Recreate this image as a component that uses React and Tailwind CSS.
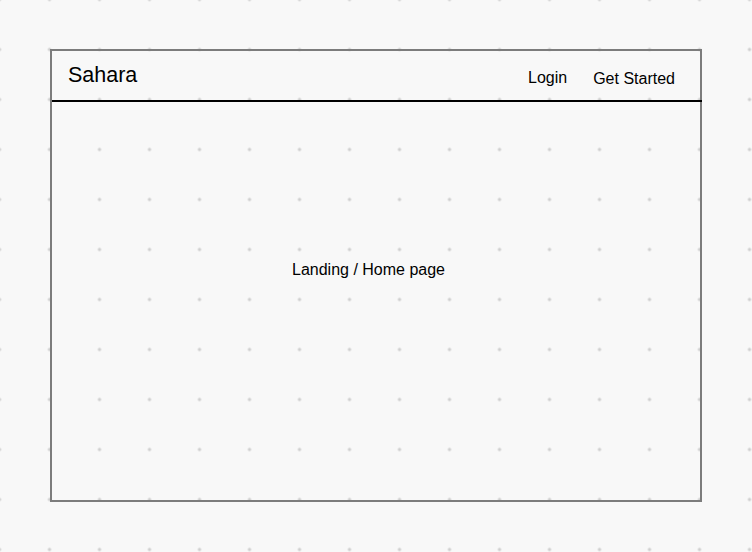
const App = () => {
  return (
    <div
      className="w-[752px] h-[552px] bg-[#f8f8f8] pl-[50px] pt-[49px] text-black"
      style={{
        fontFamily: '"Liberation Sans", Arial, sans-serif',
        backgroundImage: 'radial-gradient(circle, #cfcfcf 1.4px, transparent 1.8px)',
        backgroundSize: '50px 50px',
        backgroundPosition: '-25.5px -25.5px',
      }}
    >
      {/* Frame */}
      <div className="w-[652px] h-[453px] border-2 border-[#7c7c7c] flex flex-col">
        {/* Header */}
        <div className="h-[51px] border-b-2 border-black flex items-start justify-between pl-4 pr-[27px] -mr-[2px]">
          <div className="mt-3 text-[21.5px] leading-[24px]">Sahara</div>
          <div className="mt-[17px] flex items-start gap-[26px] text-[16px] leading-[20px]">
            <span>Login</span>
            <span className="mt-px">Get Started</span>
          </div>
        </div>

        {/* Body */}
        <div className="flex-1 pl-[240px] pt-[158px]">
          <div className="text-[16px] leading-[20px]">Landing / Home page</div>
        </div>
      </div>
    </div>
  );
};

export default App;
